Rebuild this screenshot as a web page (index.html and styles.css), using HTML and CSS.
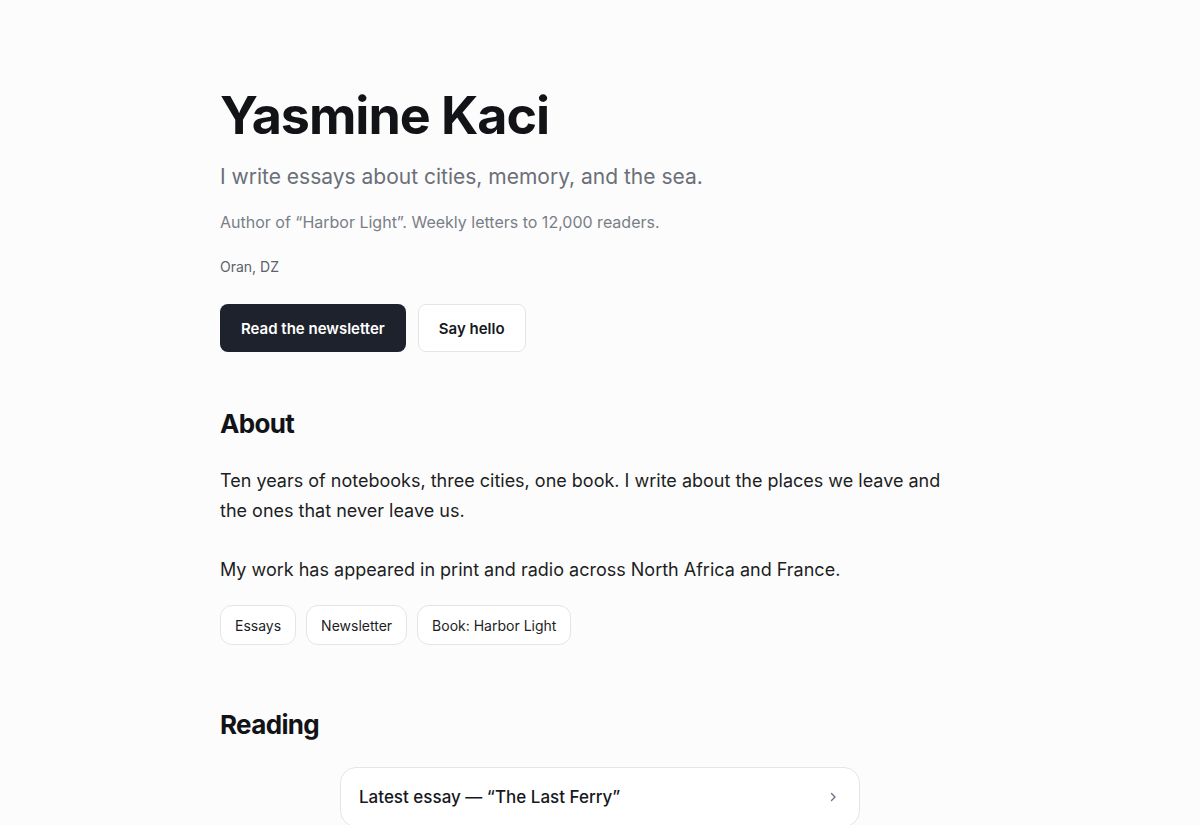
FILE: index.html
```html
<!DOCTYPE html>
<html>
  <head>
    <title>Yasmine Kaci</title>
    <meta charset="UTF-8" />
    <link rel="stylesheet" href="styles.css">
  </head>

  <body>
    <main class="page">
      <!-- intro -->
      <header class="intro">
        <h1 class="name">Yasmine Kaci</h1>
        <p class="tagline">I write essays about cities, memory, and the sea.</p>
        <p class="bio">Author of “Harbor Light”. Weekly letters to 12,000 readers.</p>
        <p class="place">Oran, DZ</p>
        <div class="actions">
          <a class="btn btn_primary" href="#">Read the newsletter</a>
          <a class="btn btn_ghost" href="#">Say hello</a>
        </div>
      </header>

      <!-- about -->
      <section class="section about">
        <h2 class="section_title">About</h2>
        <p class="text">Ten years of notebooks, three cities, one book. I write about the places we leave and the ones that never leave us.</p>
        <p class="text">My work has appeared in print and radio across North Africa and France.</p>
        <div class="tags">
          <span class="tag">Essays</span>
          <span class="tag">Newsletter</span>
          <span class="tag">Book: Harbor Light</span>
        </div>
      </section>

      <!-- reading -->
      <section class="section reading">
        <h2 class="section_title">Reading</h2>
        <a class="card" href="#">
          <span class="card_title">Latest essay — “The Last Ferry”</span>
          <svg class="chevron" width="12" height="12" viewBox="0 0 12 12" fill="none">
            <path d="M4.5 2.5 L8 6 L4.5 9.5" stroke="#6b7280" stroke-width="1.4" stroke-linecap="round" stroke-linejoin="round"/>
          </svg>
        </a>
      </section>
    </main>
  </body>
</html>
```

FILE: styles.css
```css
html {
  background: #fcfcfc;
}
body {
  margin: 0;
  font-family: Inter, "Noto Sans", sans-serif;
  color: #16181d;
}
p {
  margin: 0;
}
a {
  text-decoration: none;
  color: inherit;
}
.page {
  width: 760px;
  margin: 0 auto;
  padding-top: 85px;
}
.name {
  margin: 0;
  font-size: 52px;
  line-height: 62px;
  font-weight: 700;
  letter-spacing: -0.02em;
  color: #121317;
}
.tagline {
  margin-top: 15px;
  font-size: 21px;
  line-height: 30px;
  color: #6b6f78;
}
.bio {
  margin-top: 18px;
  font-size: 16px;
  line-height: 24px;
  color: #7a7e87;
}
.place {
  margin-top: 23px;
  font-size: 14px;
  line-height: 20px;
  color: #5d616a;
}
.actions {
  display: flex;
  gap: 12px;
  margin-top: 27px;
}
.btn {
  display: flex;
  align-items: center;
  height: 48px;
  box-sizing: border-box;
  padding: 0 21px;
  border-radius: 8px;
  font-size: 15px;
  font-weight: 600;
}
.btn_primary {
  background: #1e222c;
  color: #fff;
}
.btn_ghost {
  padding: 0 20px;
  background: #fff;
  border: 1px solid #e3e5e8;
  color: #16181d;
}
.section {
  margin-top: 56px;
}
.section_title {
  margin: 0 0 26px;
  font-size: 26px;
  line-height: 32px;
  font-weight: 700;
  letter-spacing: -0.025em;
  color: #121317;
}
.text {
  max-width: 740px;
  font-size: 18px;
  line-height: 30px;
  margin-bottom: 29px;
  color: #1c1e23;
}
.text + .text {
  margin-bottom: 20px;
}
.tags {
  display: flex;
  gap: 10px;
}
.tag {
  display: flex;
  align-items: center;
  height: 40px;
  box-sizing: border-box;
  padding: 0 14px;
  border: 1px solid #e3e5e8;
  border-radius: 12px;
  background: #fff;
  font-size: 14px;
  color: #1c1e23;
}
.reading {
  margin-top: 64px;
}
.card {
  display: flex;
  align-items: center;
  justify-content: space-between;
  width: 520px;
  height: 60px;
  box-sizing: border-box;
  margin: 0 auto;
  padding: 0 20px 0 18px;
  background: #fff;
  border: 1px solid #e3e5e8;
  border-radius: 16px;
}
.card_title {
  font-size: 17px;
  font-weight: 500;
  color: #16181d;
}
```
